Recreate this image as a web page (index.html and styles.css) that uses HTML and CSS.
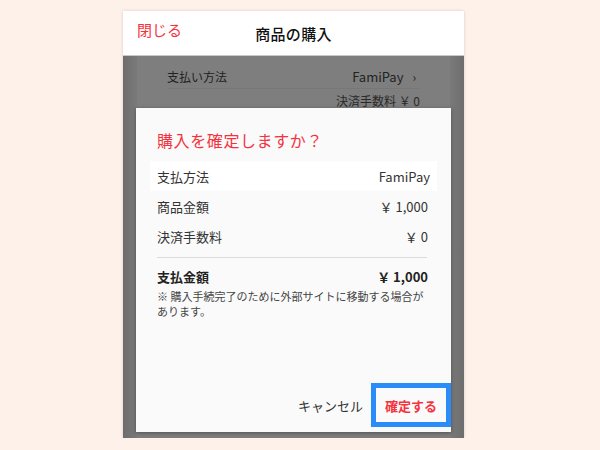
FILE: index.html
```html
<!DOCTYPE html>
<html lang="ja">
<head>
    <meta charset="utf-8">
    <title>商品の購入</title>
    <link rel="stylesheet" href="styles.css">
</head>
<body>
    <div class="phone">
        <div class="header">
            <span class="close">閉じる</span>
            <span class="title">商品の購入</span>
        </div>
        <div class="screen">
            <div class="panel">
                <div class="pay-row">
                    <span>支払い方法</span>
                    <span class="pay-value">FamiPay <span class="chevron">›</span></span>
                </div>
                <div class="fee-row">決済手数料 ￥ 0</div>
            </div>

            <div class="dialog">
                <h2 class="dialog-title">購入を確定しますか？</h2>
                <div class="row row-hl">
                    <span>支払方法</span>
                    <span>FamiPay</span>
                </div>
                <div class="row">
                    <span>商品金額</span>
                    <span>￥ 1,000</span>
                </div>
                <div class="row">
                    <span>決済手数料</span>
                    <span>￥ 0</span>
                </div>
                <div class="divider"></div>
                <div class="row total">
                    <span>支払金額</span>
                    <span>￥ 1,000</span>
                </div>
                <p class="note">※ 購入手続完了のために外部サイトに移動する場合があります。</p>
                <div class="actions">
                    <button class="btn cancel">キャンセル</button>
                    <button class="btn confirm">確定する</button>
                </div>
            </div>
        </div>
    </div>
</body>
</html>
```

FILE: styles.css
```css
body {
    margin: 0;
    background: #fdf1e9;
    font-family: "Noto Sans CJK JP", "Noto Sans", sans-serif;
    color: #333;
}
.phone {
    width: 341px;
    height: 427px;
    margin: 11px 0 0 123px;
    display: flex;
    flex-direction: column;
    box-shadow: 0 0 3px rgba(0,0,0,0.15);
}
.header {
    height: 44px;
    background: #fff;
    border-bottom: 1px solid #c9c9c9;
    display: flex;
    align-items: center;
    justify-content: center;
    position: relative;
}
.close {
    position: absolute;
    left: 14px;
    top: 8px;
    color: #f5333f;
    font-size: 15px;
}
.title {
    font-size: 15px;
    font-weight: 500;
    color: #111;
    letter-spacing: 0.3px;
}
.screen {
    flex: 1;
    background: linear-gradient(90deg, #6d6d6d 0, #7a7a7a 14px, #7a7a7a 327px, #6d6d6d 341px);
    position: relative;
    overflow: hidden;
}
.panel {
    margin: 0 14px;
    height: 100%;
    background: #7e7e7e;
    padding: 0 30px;
}
.pay-row {
    display: flex;
    justify-content: space-between;
    padding: 12px 0 2px;
    font-size: 12px;
    line-height: 18px;
    color: #222;
    border-bottom: 1px solid #777;
}
.pay-value {
    font-size: 13px;
    margin-right: 4px;
}
.chevron {
    margin-left: 6px;
    font-size: 12px;
}
.fee-row {
    text-align: right;
    font-size: 12px;
    line-height: 16px;
    padding-top: 4px;
    color: #2a2a2a;
}
.dialog {
    position: absolute;
    left: 13px;
    top: 52px;
    width: 315px;
    height: 324px;
    box-sizing: border-box;
    background: #fafafa;
    padding: 20px 15px 0 14px;
    display: flex;
    flex-direction: column;
    box-shadow: 0 1px 4px rgba(0,0,0,0.35);
}
.dialog-title {
    margin: 0 0 9px 7px;
    font-size: 16px;
    font-weight: 400;
    color: #f5333f;
    line-height: 24px;
    letter-spacing: 0.6px;
}
.row {
    display: flex;
    justify-content: space-between;
    align-items: center;
    height: 30px;
    padding: 0 8px 0 7px;
    font-size: 13px;
    color: #333;
}
.row-hl {
    background: #fff;
    margin-right: -1px;
    padding-right: 7px;
}
.divider {
    height: 1px;
    background: #dcdcdc;
    margin: 6px 9px 0 7px;
}
.total {
    font-weight: 700;
    height: 36px;
    color: #222;
}
.note {
    margin: -5px 8px 0 7px;
    font-size: 11px;
    line-height: 15px;
    color: #444;
}
.actions {
    margin-top: auto;
    display: flex;
    justify-content: flex-end;
    align-items: center;
    margin-bottom: 5px;
    margin-right: -15px;
}
.btn {
    font-family: inherit;
    font-size: 13px;
    background: none;
    border: none;
    cursor: pointer;
}
.cancel {
    color: #333;
    padding: 0 8px 0 0;
}
.confirm {
    color: #f5333f;
    font-weight: 700;
    width: 80px;
    height: 44px;
    border: 5px solid #2a8cf8;
    box-sizing: border-box;
}
```
